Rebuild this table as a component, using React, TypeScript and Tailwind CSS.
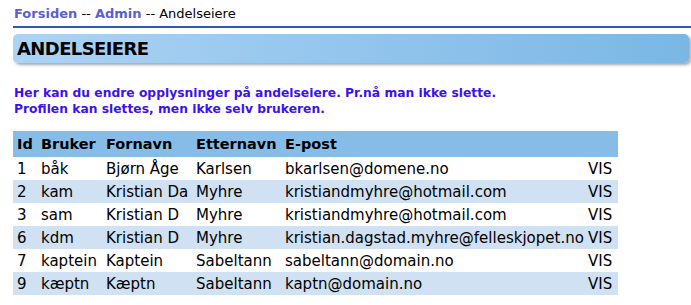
type Owner = {
  id: number;
  user: string;
  first: string;
  last: string;
  email: string;
};

const owners: Owner[] = [
  { id: 1, user: 'båk', first: 'Bjørn Åge', last: 'Karlsen', email: 'bkarlsen@domene.no' },
  { id: 2, user: 'kam', first: 'Kristian Da', last: 'Myhre', email: 'kristiandmyhre@hotmail.com' },
  { id: 3, user: 'sam', first: 'Kristian D', last: 'Myhre', email: 'kristiandmyhre@hotmail.com' },
  { id: 6, user: 'kdm', first: 'Kristian D', last: 'Myhre', email: 'kristian.dagstad.myhre@felleskjopet.no' },
  { id: 7, user: 'kaptein', first: 'Kaptein', last: 'Sabeltann', email: 'sabeltann@domain.no' },
  { id: 9, user: 'kæptn', first: 'Kæptn', last: 'Sabeltann', email: 'kaptn@domain.no' },
];

export default function App() {
  return (
    <div className="min-h-[305px] bg-white pl-[13px] pt-[6px] font-['DejaVu_Sans',Verdana,sans-serif] text-black">
      {/* breadcrumb */}
      <div className="text-[13px] leading-[16px] pl-[1px]">
        <a className="font-bold text-[#5b5fd0]">Forsiden</a>
        <span> -- </span>
        <a className="font-bold text-[#5b5fd0]">Admin</a>
        <span> -- Andelseiere</span>
      </div>
      <div className="mt-[4px] h-[2px] bg-[#2a5ea8]" />

      {/* page title */}
      <div className="mt-[6px] mr-[2px] h-[29px] rounded-[5px] bg-gradient-to-r from-[#acd3f4] to-[#7ab7e5] pl-[4px] shadow-[2px_2px_3px_rgba(0,0,0,0.35)] flex items-center">
        <h1 className="text-[18px] font-bold leading-none tracking-[-0.6px]">ANDELSEIERE</h1>
      </div>

      <p className="mt-[22px] pl-[1px] text-[12.3px] font-bold leading-[16px] text-[#3b12ee]">
        Her kan du endre opplysninger på andelseiere. Pr.nå man ikke slette.
        <br />
        Profilen kan slettes, men ikke selv brukeren.
      </p>

      <table className="mt-[14px] w-[605px] border-collapse text-[15px] leading-[18px]">
        <thead>
          <tr className="h-[26px] bg-[#85bde8] text-left text-[14.5px]">
            <th className="w-[24px] pl-[4px] font-bold">Id</th>
            <th className="w-[65px] pl-[4px] font-bold">Bruker</th>
            <th className="w-[90px] pl-[4px] font-bold">Fornavn</th>
            <th className="w-[89px] pl-[4px] font-bold">Etternavn</th>
            <th className="w-[303px] pl-[4px] font-bold">E-post</th>
            <th className="pl-[4px]" />
          </tr>
        </thead>
        <tbody>
          {owners.map((o, i) => (
            <tr key={o.id} className={`h-[23px] ${i % 2 === 1 ? 'bg-[#cfe1f2]' : 'bg-white'}`}>
              <td className="pl-[4px]">{o.id}</td>
              <td className="pl-[4px]">{o.user}</td>
              <td className="pl-[4px] whitespace-nowrap">{o.first}</td>
              <td className="pl-[4px]">{o.last}</td>
              <td className="pl-[4px] whitespace-nowrap">{o.email}</td>
              <td className="pl-[4px]">VIS</td>
            </tr>
          ))}
        </tbody>
      </table>
    </div>
  );
}
